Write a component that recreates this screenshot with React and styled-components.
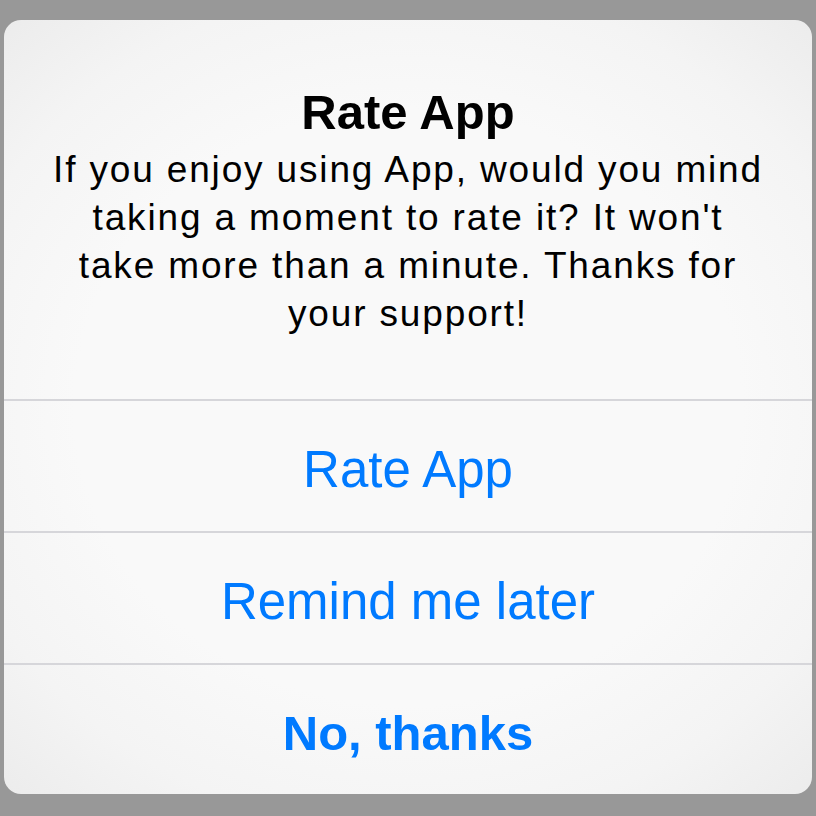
import styled, { createGlobalStyle } from "styled-components";

const GlobalStyle = createGlobalStyle`
  html, body {
    margin: 0;
    padding: 0;
    background: #989898;
  }
  body {
    font-family: "Liberation Sans", Arial, sans-serif;
  }
`;

const Screen = styled.div`
  width: 816px;
  height: 816px;
  padding: 20px 4px 22px;
  box-sizing: border-box;
  display: flex;
`;

const Dialog = styled.div`
  flex: 1;
  display: flex;
  flex-direction: column;
  border-radius: 17px;
  overflow: hidden;
  background: radial-gradient(
    ellipse 75% 70% at 50% 50%,
    #f9f9f9 55%,
    #f4f4f4 78%,
    #ebebeb 100%
  );
`;

const Header = styled.div`
  height: 379px;
  box-sizing: border-box;
  padding: 64px 20px 0;
  text-align: center;
  color: #000;
`;

const Title = styled.h1`
  margin: 0;
  font-size: 49px;
  line-height: 56px;
  font-weight: 700;
`;

const Message = styled.p`
  margin: 6px 0 0;
  font-size: 37px;
  line-height: 48px;
  letter-spacing: 1.85px;
  font-weight: 400;
  white-space: nowrap;
`;

const Action = styled.button`
  height: ${(p) => p.$height}px;
  flex-shrink: 0;
  display: flex;
  align-items: center;
  justify-content: center;
  padding: 7px 0 0;
  margin: 0;
  border: none;
  border-top: 2px solid #d6d6da;
  background: transparent;
  color: #007aff;
  font-family: "Liberation Sans", Arial, sans-serif;
  font-size: ${(p) => (p.$bold ? 49 : 51)}px;
  font-weight: ${(p) => (p.$bold ? 700 : 400)};
  cursor: pointer;
`;

export default function App() {
  return (
    <>
      <GlobalStyle />
      <Screen>
        <Dialog>
          <Header>
            <Title>Rate App</Title>
            <Message>
              If you enjoy using App, would you mind
              <br />
              taking a moment to rate it? It won't
              <br />
              take more than a minute. Thanks for
              <br />
              your support!
            </Message>
          </Header>
          <Action $height={132}>Rate App</Action>
          <Action $height={132}>Remind me later</Action>
          <Action $height={131} $bold>
            No, thanks
          </Action>
        </Dialog>
      </Screen>
    </>
  );
}
